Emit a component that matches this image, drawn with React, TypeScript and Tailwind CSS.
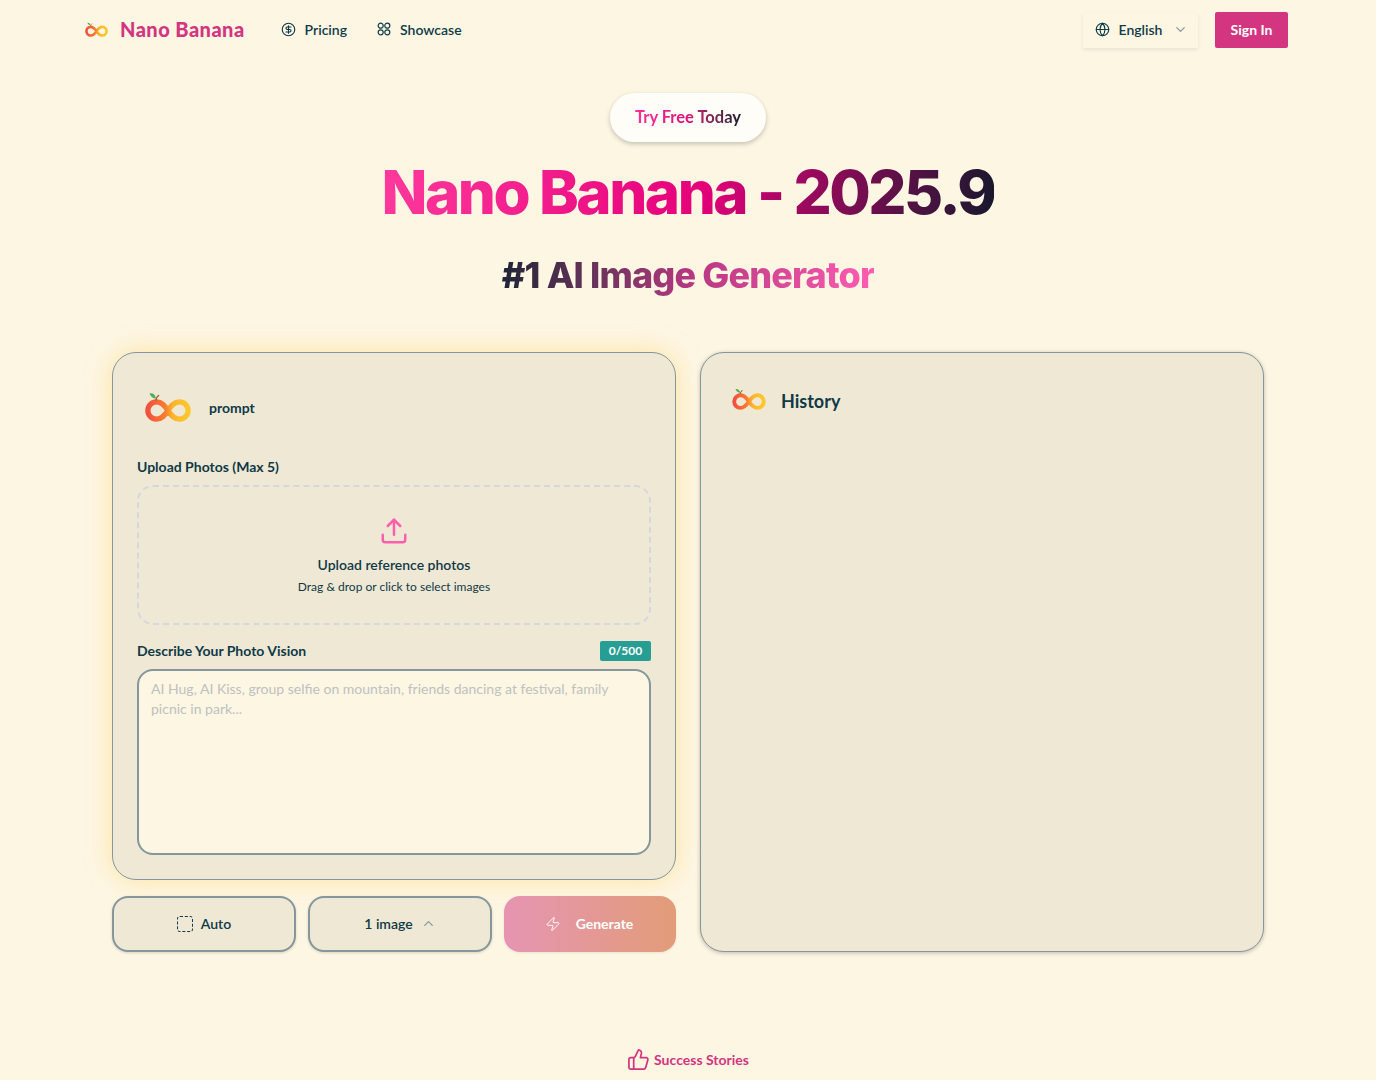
import React from 'react';
import { ChevronDown, ChevronUp, CircleDollarSign, Globe, Upload, Zap, ThumbsUp } from 'lucide-react';

const Logo = ({ id, className }: { id: string; className: string }) => (
  <svg viewBox="3 0 40 26" className={className} fill="none">
    <defs>
      <linearGradient id={id} x1="0" y1="0" x2="1" y2="0">
        <stop offset="0" stopColor="#f2503f" />
        <stop offset="0.42" stopColor="#f97b2f" />
        <stop offset="0.62" stopColor="#fdb52a" />
        <stop offset="1" stopColor="#fcc72c" />
      </linearGradient>
    </defs>
    <path d="M23 16c-3-4.500-5.500-7.500-10-7.500a7.500 7.500 0 0 0 0 15c4.500 0 7-3 10-7.500s5.500-7.500 10-7.500a7.500 7.500 0 0 1 0 15c-4.500 0-7-3-10-7.500Z" stroke={`url(#${id})`} strokeWidth="4.600" />
    <path d="M12.500 7c.2-1.700 1-3 2.300-4" stroke="#9a5a33" strokeWidth="1.200" strokeLinecap="round" />
    <path d="M12.500 5.500C10 5.500 8 4 7 1.200c2.800-.4 5 .8 5.500 4.300Z" fill="#4caf50" />
  </svg>
);

const ShowcaseIcon = () => (
  <svg viewBox="0 0 14 14" className="h-[14px] w-[14px]" fill="none" stroke="currentColor" strokeWidth="1.200">
    <circle cx="3.700" cy="3.700" r="2.500" />
    <circle cx="10.300" cy="3.700" r="2.500" />
    <circle cx="3.700" cy="10.300" r="2.500" />
    <circle cx="10.300" cy="10.300" r="2.500" />
  </svg>
);

const App: React.FC = () => {
  return (
    <div className="h-[1080px] overflow-hidden bg-[#fdf6e3] text-[#0f3a47] font-['Lato','Liberation_Sans',sans-serif]">
      {/* header */}
      <header className="flex h-[60px] items-center justify-between pl-[85px] pr-[88px]">
        <div className="flex items-center">
          <Logo id="logo-nav" className="mt-[-1px] h-[15px] w-[23px]" />
          <span className="ml-[12px] mt-[-2px] text-[20px] font-black leading-[28px] tracking-[0.45px] text-[#d43580]">Nano Banana</span>
          <nav className="ml-[36px] mt-[-2px] flex items-center gap-[30px] text-[14px] font-semibold">
            <a className="flex items-center gap-[9px]">
              <CircleDollarSign size={15} strokeWidth={1.800} />
              Pricing
            </a>
            <a className="flex items-center gap-[9px]">
              <ShowcaseIcon />
              Showcase
            </a>
          </nav>
        </div>
        <div className="flex items-center gap-[17px]">
          <button className="flex h-[35px] w-[115px] items-center justify-center gap-[9px] bg-[#fdf6e3] pb-[2px] pl-[2px] text-[14px] font-semibold shadow-[0_2px_4px_rgba(0,0,0,0.08)]">
            <Globe size={15} strokeWidth={1.800} />
            English
            <ChevronDown size={15} className="ml-[2px] text-[#87979b]" />
          </button>
          <button className="h-[36px] w-[73px] rounded-[2px] bg-[#d43580] pb-[1px] text-[14px] font-bold text-white">Sign In</button>
        </div>
      </header>

      {/* hero */}
      <section className="flex flex-col items-center">
        <div className="mt-[33px] flex h-[49px] w-[156px] items-center justify-center rounded-full bg-[#fffdf7] shadow-[0_2px_5px_rgba(0,0,0,0.22)]">
          <span className="bg-gradient-to-r from-[#ff2f9a] via-[#dd0a78] to-[#1a1a2e] bg-clip-text text-[16.500px] font-bold text-transparent">Try Free Today</span>
        </div>
        <h1 className="mt-[12px] bg-[linear-gradient(100deg,#ff3a9d_0%,#e5007a_52%,#15192c_100%)] bg-clip-text font-['Inter',sans-serif] text-[60px] font-extrabold leading-[76px] tracking-[-2.450px] text-transparent">
          Nano Banana - 2025.9
        </h1>
        <h2 className="mt-[23px] bg-gradient-to-r from-[#1f2437] via-[#b53780] to-[#ff5cb2] bg-clip-text font-['Inter',sans-serif] text-[36px] font-extrabold leading-[44px] tracking-[-0.850px] text-transparent">
          #1 AI Image Generator
        </h2>
      </section>

      {/* workspace */}
      <main className="mt-[55px] grid grid-cols-2 gap-[24px] px-[112px]">
        <div className="flex flex-col gap-[16px]">
          <div className="h-[528px] rounded-[24px] border border-[#84979b] bg-[#efe8d5] px-[24px] shadow-[0_0_24px_rgba(255,213,110,0.55)]">
            <div className="mt-[39px] flex items-center">
              <Logo id="logo-prompt" className="ml-[8px] h-[30px] w-[46px]" />
              <span className="ml-[18px] mt-[1px] text-[14px] font-bold">prompt</span>
            </div>
            <label className="mt-[35px] block text-[14px] font-bold leading-[20px]">Upload Photos (Max 5)</label>
            <div className="mt-[8px] flex h-[140px] flex-col items-center rounded-[16px] border-2 border-dashed border-[#d3d8dd]">
              <Upload size={30} strokeWidth={2} className="mt-[29px] text-[#fb5fae]" />
              <p className="mt-[9px] text-[14px] font-semibold leading-[20px]">Upload reference photos</p>
              <p className="mt-[4px] text-[12px] leading-[16px]">Drag &amp; drop or click to select images</p>
            </div>
            <div className="mt-[16px] flex items-center justify-between">
              <label className="text-[14px] font-bold leading-[20px]">Describe Your Photo Vision</label>
              <span className="flex h-[20px] w-[51px] items-center justify-center rounded-[2px] bg-[#279e94] text-[12px] font-bold text-white">0/500</span>
            </div>
            <div className="mt-[8px] h-[186px] rounded-[16px] border-2 border-[#84979b] bg-[#fdf6e3] px-[12px] py-[8px] text-[14px] leading-[20px] text-[#bdc1c1]">
              AI Hug, AI Kiss, group selfie on mountain, friends dancing at festival, family picnic in park...
            </div>
          </div>
          <div className="grid grid-cols-[184px_184px_172px] gap-[12px]">
            <button className="flex h-[56px] items-center justify-center gap-[8px] rounded-[16px] border-2 border-[#84979b] bg-[#efe8d5] pb-[1px] text-[14px] font-semibold shadow-[0_1px_3px_rgba(0,0,0,0.15)]">
              <span className="h-[16px] w-[16px] rounded-[3px] border border-dashed border-[#0f3a47]" />
              Auto
            </button>
            <button className="flex h-[56px] items-center justify-center gap-[8px] rounded-[16px] border-2 border-[#84979b] bg-[#efe8d5] pb-[1px] text-[14px] font-semibold shadow-[0_1px_3px_rgba(0,0,0,0.15)]">
              1 image
              <ChevronUp size={15} className="text-[#87979b]" />
            </button>
            <button className="flex h-[56px] items-center justify-center gap-[15px] rounded-[16px] bg-gradient-to-r from-[#e694b1] to-[#e29c78] pb-[1px] pr-[2px] text-[14px] font-bold text-white shadow-[0_1px_3px_rgba(0,0,0,0.08)]">
              <Zap size={16} strokeWidth={1.400} />
              Generate
            </button>
          </div>
        </div>

        <div className="h-[600px] rounded-[24px] border border-[#84979b] bg-[#efe8d5] px-[30px] pt-[35px] shadow-[0_1px_4px_rgba(0,0,0,0.25)]">
          <div className="flex items-center">
            <Logo id="logo-history" className="h-[22px] w-[36px] -translate-y-[3px]" />
            <span className="ml-[14px] text-[18px] font-bold">History</span>
          </div>
        </div>
      </main>

      {/* success stories */}
      <div className="mt-[96px] flex items-center justify-center gap-[4px] text-[14px] font-bold text-[#d43580]">
        <ThumbsUp size={23} strokeWidth={1.800} />
        Success Stories
      </div>
    </div>
  );
};

export default App;
